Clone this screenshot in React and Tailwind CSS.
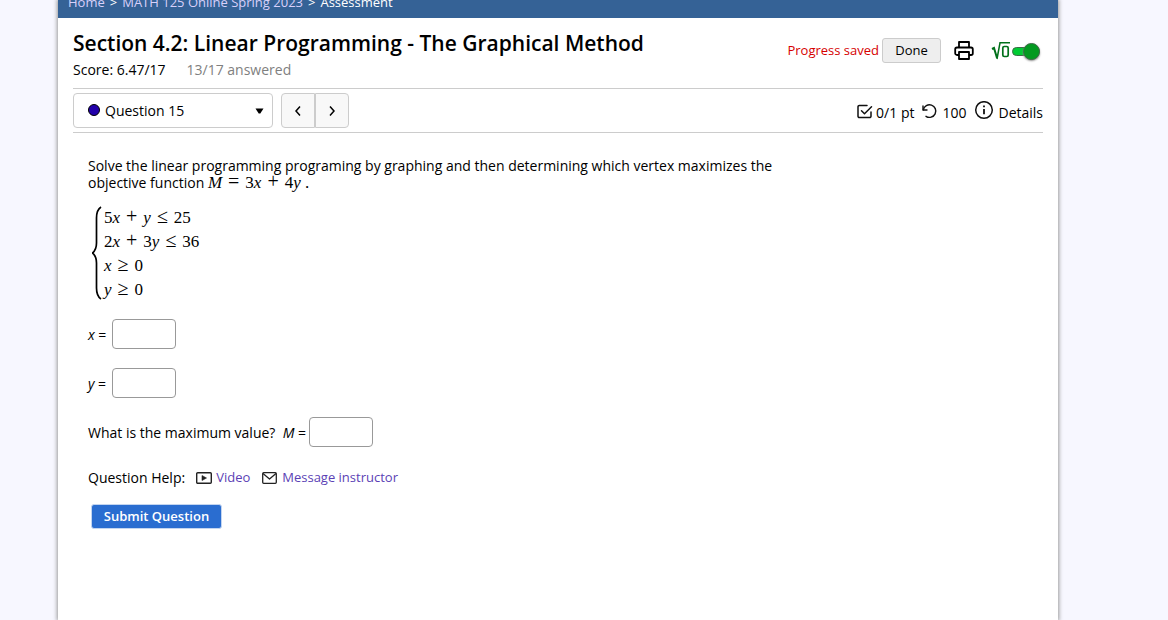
import React from "react";

function PrintIcon() {
  return (
    <svg width="20" height="20" viewBox="0 0 20 20" fill="none" stroke="#000" strokeWidth="1.8" strokeLinejoin="round">
      <path d="M5 6.500V1h10v5.500" />
      <path d="M5 14H3a1.8 1.8 0 0 1-1.8-1.8V8.300A1.8 1.8 0 0 1 3 6.500h14a1.8 1.8 0 0 1 1.8 1.8v3.9a1.8 1.8 0 0 1-1.8 1.8h-2" />
      <path d="M5 11h10v7H5z" />
    </svg>
  );
}

function RootIcon() {
  return (
    <svg width="20" height="20" viewBox="0 0 20 20" fill="none" stroke="#00701a">
      <path d="M1 8l2-1 3 10" strokeWidth="2" />
      <path d="M6 18L9 1.800h10" strokeWidth="1.500" />
      <rect x="11.800" y="5.500" width="5.400" height="10" rx="1.500" strokeWidth="1.700" />
    </svg>
  );
}

function CheckSquareIcon() {
  return (
    <svg width="16" height="16" viewBox="0 0 16 16" fill="none" stroke="#111" strokeWidth="1.500" strokeLinecap="round" strokeLinejoin="round">
      <path d="M10 2.500H2.300A1.300 1.300 0 0 0 1 3.800v9.400a1.300 1.300 0 0 0 1.300 1.300h10.400a1.300 1.300 0 0 0 1.300-1.300V9" />
      <path d="M4.500 7.800l3 3 7-7" />
    </svg>
  );
}

function RetryIcon() {
  return (
    <svg width="16" height="16" viewBox="0 0 16 16" fill="none" stroke="#111" strokeWidth="1.400" strokeLinecap="round" strokeLinejoin="round">
      <path d="M1 3v4h4" />
      <path d="M1.300 6.800A6.300 6.300 0 1 1 4 13.300" />
    </svg>
  );
}

function InfoIcon() {
  return (
    <svg width="20" height="20" viewBox="0 0 20 20" fill="none" stroke="#111" strokeWidth="1.500">
      <circle cx="10" cy="9" r="8.300" />
      <path d="M10 8v5.200M10 4.500v1.800" strokeWidth="1.800" />
    </svg>
  );
}

function VideoIcon() {
  return (
    <svg width="16" height="12" viewBox="0 0 16 12" fill="none" stroke="#222" strokeWidth="1.400">
      <rect x="0.700" y="0.700" width="14.600" height="10.600" rx="1" />
      <path d="M6 3.500v5L10.500 6z" fill="#222" strokeWidth="0.600" />
    </svg>
  );
}

function MailIcon() {
  return (
    <svg width="15" height="12" viewBox="0 0 15 12" fill="none" stroke="#222" strokeWidth="1.300" strokeLinejoin="round">
      <rect x="0.700" y="0.700" width="13.600" height="10.600" rx="1" />
      <path d="M1 1.500l6.500 5.500L14 1.500" />
    </svg>
  );
}

function Chevron({ d }) {
  return (
    <svg width="8" height="12" viewBox="0 0 8 12" fill="none" stroke="#000" strokeWidth="1.500">
      <path d={d} />
    </svg>
  );
}

function Var({ children }) {
  return <i>{children}</i>;
}

function Op({ children }) {
  return <span className="mx-px text-[20px] leading-[0px]"> {children} </span>;
}

const mathFont = "font-['Liberation_Serif',serif] text-[17px]";

function AnswerBox({ id }) {
  return <input id={id} type="text" className="h-[30px] w-16 rounded-[4px] border border-[#999] bg-white px-1" />;
}

export default function App() {
  return (
    <div className="min-h-screen bg-[#f7f7ff] pl-[58px] pr-[110px] font-['Open_Sans','Noto_Sans',sans-serif] text-[14px] leading-[17px] text-black">
      <div className="min-h-screen bg-white shadow-[0_0_4px_1px_#999]">
        <nav aria-label="Breadcrumb" className="flex h-[18px] items-end gap-[5px] overflow-hidden whitespace-nowrap bg-[#356296] px-2.5 pb-[7px] text-[13px] font-medium text-white">
          <a href="#home" className="text-[#d8d0fa]">Home</a>
          <span>&gt;</span>
          <a href="#course" className="text-[#d8d0fa]">MATH 125 Online Spring 2023</a>
          <span>&gt;</span>
          <span>Assessment</span>
        </nav>

        <main className="pl-[15px] pr-[15px]">
          <header className="flex h-[70px] items-start justify-between">
            <div className="pt-[11px]">
              <h1 className="text-[21px] font-semibold leading-7">Section 4.2: Linear Programming - The Graphical Method</h1>
              <p className="flex gap-[21px] pt-[5px] leading-4">
                <span>Score: 6.47/17</span>
                <span className="text-[#808080]">13/17 answered</span>
              </p>
            </div>
            <div className="flex items-center pt-5 text-[13px]">
              <span className="text-[#d60000]">Progress saved</span>
              <button type="button" className="ml-[3px] h-[25px] w-[59px] rounded-[3px] border border-[#ccc] bg-[#eee]">Done</button>
              <button type="button" aria-label="Print" className="ml-[13px]"><PrintIcon /></button>
              <label className="ml-[17px] mr-[3px] flex items-center">
                <RootIcon />
                <input type="checkbox" defaultChecked aria-label="Equation editor" className="sr-only" />
                <span className="ml-px mt-[2px] flex h-[9px] w-7 items-center justify-end rounded-full border border-[#3c6b46] bg-[#00cc33]">
                  <span className="-mr-px size-[17px] shrink-0 rounded-full border border-[#3c6b46] bg-[#039a20] shadow-[0_1px_2px_#888]" />
                </span>
              </label>
            </div>
          </header>

          <div className="flex h-[45px] items-center justify-between border-y border-[#ccc]">
            <div className="flex gap-2">
              <div className="relative">
                <select aria-label="Question" className="h-[35px] w-[200px] appearance-none rounded-[4px] border border-[#ccc] bg-white pl-[31px]">
                  <option>Question 15</option>
                </select>
                <span className="pointer-events-none absolute left-[15px] top-[11px] size-3 rounded-full border border-black bg-[#2200aa]" />
                <svg className="pointer-events-none absolute right-[9px] top-[15px]" width="9" height="6" viewBox="0 0 9 6"><path d="M0.500 0.500h8L5.300 5.500H3.700z" /></svg>
              </div>
              <div className="flex">
                <button type="button" aria-label="Previous question" className="flex h-[35px] w-[34px] items-center justify-center rounded-l-[4px] border border-[#ccc] bg-[#f8f8f8]"><Chevron d="M6 1.500L2 6l4 4.500" /></button>
                <button type="button" aria-label="Next question" className="flex h-[35px] w-[34px] items-center justify-center rounded-r-[4px] border border-[#ccc] bg-[#f8f8f8]"><Chevron d="M2 1.500L6 6l-4 4.500" /></button>
              </div>
            </div>
            <div className="flex items-center">
              <CheckSquareIcon />
              <span className="ml-[3px] pt-1">0/1 pt</span>
              <span className="ml-2"><RetryIcon /></span>
              <span className="ml-1 pt-1">100</span>
              <button type="button" className="ml-2 flex items-center gap-1"><InfoIcon /><span className="pt-1">Details</span></button>
            </div>
          </div>

          <section className="px-[15px] pt-6">
            <p className="max-w-[690px]">
              Solve the linear programming programing by graphing and then determining which vertex maximizes the objective function{" "}
              <span className={`${mathFont} leading-none`}><Var>M</Var><Op>=</Op>3<Var>x</Var><Op>+</Op>4<Var>y</Var> .</span>
            </p>

            <div className="flex gap-[2px] pl-1 pt-[15px]">
              <svg width="10" height="94" viewBox="0 0 10 94" fill="none" stroke="#000" strokeWidth="1.700">
                <path d="M9 1C6 3 4.500 6 4.500 12v25c0 5-1 7.500-4 10 3 2.500 4 5 4 10v25c0 6 1.500 9 4.500 11" />
              </svg>
              <div className={`${mathFont} leading-6`}>
                <div>5<Var>x</Var><Op>+</Op><Var>y</Var><Op>≤</Op>25</div>
                <div>2<Var>x</Var><Op>+</Op>3<Var>y</Var><Op>≤</Op>36</div>
                <div><Var>x</Var><Op>≥</Op>0</div>
                <div><Var>y</Var><Op>≥</Op>0</div>
              </div>
            </div>

            <div className="flex flex-col gap-[19px] pt-[17px]">
              <div className="flex items-center">
                <label htmlFor="answer-x" className="w-6 whitespace-nowrap"><Var>x</Var> =</label>
                <AnswerBox id="answer-x" />
              </div>
              <div className="flex items-center">
                <label htmlFor="answer-y" className="w-6 whitespace-nowrap"><Var>y</Var> =</label>
                <AnswerBox id="answer-y" />
              </div>
              <div className="flex items-center gap-[3px]">
                <label htmlFor="answer-m">What is the maximum value?&nbsp; <Var>M</Var> =</label>
                <AnswerBox id="answer-m" />
              </div>
            </div>

            <div className="flex items-center pt-[22px]">
              <span>Question Help:</span>
              <a href="#video" className="ml-[11px] flex items-center gap-1 text-[13px] text-[#5b3fb5]"><VideoIcon />Video</a>
              <a href="#message" className="ml-3 flex items-center gap-[5px] text-[13px] text-[#5b3fb5]"><MailIcon />Message instructor</a>
            </div>

            <button type="button" className="ml-[3px] mt-[18px] h-[25px] w-[131px] rounded-[3px] border border-[#c3d5f0] bg-[#2a6dd0] text-[13px] font-semibold text-white">Submit Question</button>
          </section>
        </main>
      </div>
    </div>
  );
}
